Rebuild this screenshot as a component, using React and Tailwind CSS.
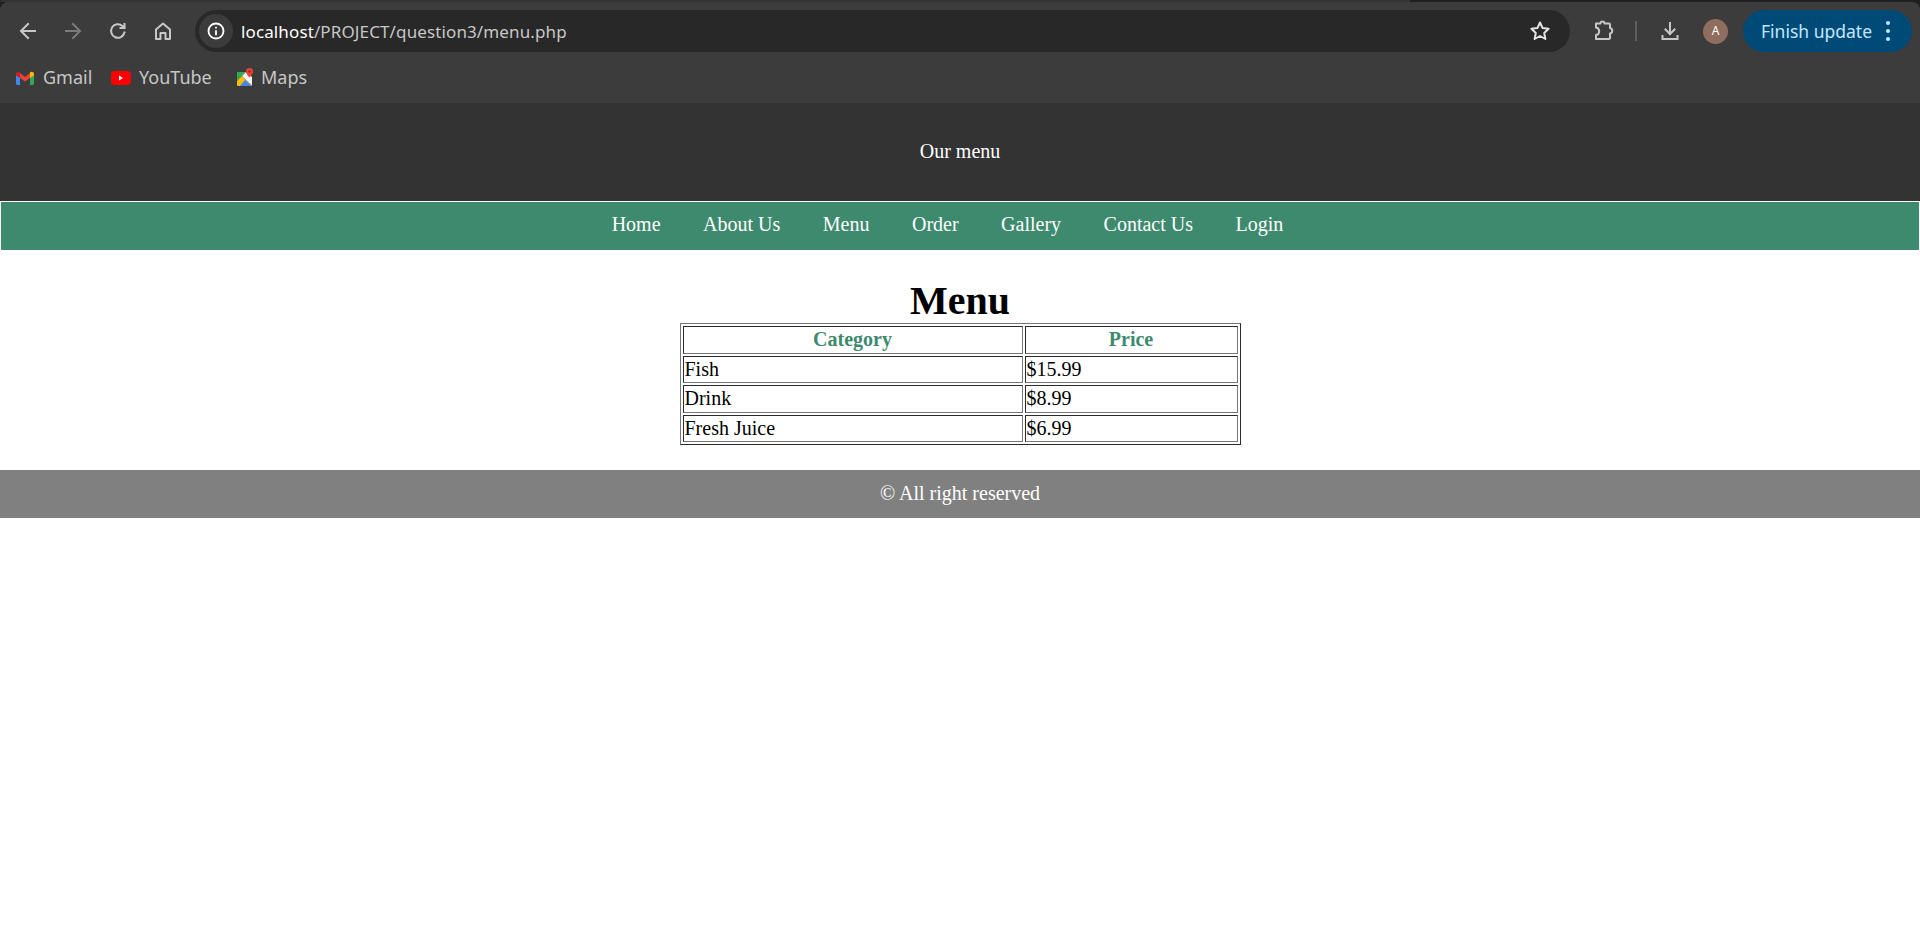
import React from "react";

const navItems = ["Home", "About Us", "Menu", "Order", "Gallery", "Contact Us", "Login"];
const rows = [
  ["Fish", "$15.99", "h-[27px]"],
  ["Drink", "$8.99", "h-[28px]"],
  ["Fresh Juice", "$6.99", "h-[27px]"],
];

const cellBorder = "border border-t-[#2b2b2b] border-l-[#2b2b2b] border-r-[#767676] border-b-[#767676]";

function Icon({ children, className = "" }) {
  return (
    <svg viewBox="0 0 24 24" fill="none" stroke="currentColor" strokeWidth="2" strokeLinecap="square" className={"w-6 h-6 " + className}>
      {children}
    </svg>
  );
}

function GmailIcon() {
  return (
    <svg viewBox="0 0 18 14" className="w-[18px] h-[14px]">
      <path d="M0 3v9.500A1.500 1.500 0 0 0 1.500 14H4V6.500Z" fill="#4285f4" />
      <path d="M18 3v9.500a1.500 1.500 0 0 1-1.500 1.500H14V6.500Z" fill="#34a853" />
      <path d="M4 7V2l5 4 5-4V7L9 10.500Z" fill="#ea4335" />
      <path d="M0 3.200C0 1 2.500 .2 4 1.500V7L0 4.300Z" fill="#c5221f" />
      <path d="M18 3.200C18 1 15.500 .2 14 1.500V7L18 4.300Z" fill="#fbbc04" />
    </svg>
  );
}

function YoutubeIcon() {
  return (
    <svg viewBox="0 0 20 14" className="w-[20px] h-[14px]">
      <rect width="20" height="14" rx="4" fill="#ff0000" />
      <path d="M8 4.500v5L12 7Z" fill="#fff" />
    </svg>
  );
}

function MapsIcon() {
  return (
    <svg viewBox="0 0 18 19" className="w-[18px] h-[19px]">
      <path d="M1 4h9L1 13Z" fill="#34a853" />
      <path d="M1 13l5-5 9 10H2a1 1 0 0 1-1-1Z" fill="#fbbc04" />
      <path d="M4 18l5-6 6 6Z" fill="#4285f4" />
      <path d="M6 8l4-4 6 5v9Z" fill="#f1f3f4" />
      <path d="M13.500 0a3.500 3.500 0 0 0-3.500 3.500c0 2.500 3.500 6 3.500 6s3.500-3.500 3.500-6A3.500 3.500 0 0 0 13.500 0Z" fill="#ea4335" />
      <circle cx="13.500" cy="3.500" r="1.200" fill="#a52714" />
    </svg>
  );
}

function Bookmark({ icon, label, className }) {
  return (
    <div className={"flex items-center text-[#c7c7c7] text-[18px] " + className}>
      {icon}
      <span>{label}</span>
    </div>
  );
}

function BrowserChrome() {
  return (
    <div className="bg-[#1f1f1f] font-['Noto_Sans',sans-serif]">
      <div className="h-[2px] w-[1410px] bg-[#333333] rounded-tl-[6px]" />
      <div className="bg-[#3c3c3c] rounded-t-[8px] h-[101px] flex flex-col">
        <div className="h-[52px] flex items-center pt-[6px]">
          <div className="w-[195px] pl-[16px] flex items-center gap-[21px] text-[#c7c7c7] shrink-0">
            <Icon><path d="M19 12H6M12 19l-7-7 7-7" /></Icon>
            <Icon className="text-[#7b7b7b]"><path d="M5 12h13M12 5l7 7-7 7" /></Icon>
            <Icon><path d="M18.500 13.500A6.800 6.800 0 1 1 16.500 7l2 2M18.500 5v4h-4" /></Icon>
            <Icon><path d="M5 10.500 12 4.500l7 6V20h-4.500v-6h-5v6H5Z" strokeLinejoin="round" /></Icon>
          </div>
          <div className="w-[1375px] h-[42px] bg-[#282828] rounded-full flex items-center pl-[4px] pr-[18px]">
            <div className="w-[34px] h-[34px] rounded-full bg-[#3c3c3c] flex items-center justify-center text-white">
              <svg viewBox="0 0 24 24" fill="none" stroke="currentColor" strokeWidth="2.200" className="w-[20px] h-[20px]">
                <circle cx="12" cy="12" r="9" />
                <path d="M12 11v6M12 7v2" />
              </svg>
            </div>
            <div className="ml-[8px] pt-px text-[17px] tracking-[0.12px] text-[#c7c7c7]"><span className="text-white">localhost</span>/PROJECT/question3/menu.php</div>
            <svg viewBox="0 0 24 24" fill="none" stroke="#e3e3e3" strokeWidth="2" strokeLinejoin="round" className="w-[24px] h-[24px] ml-auto">
              <path d="m12 3.500 2.600 5.600 6 .7-4.400 4.200 1.200 6L12 17l-5.400 3 1.200-6-4.400-4.200 6-.7Z" />
            </svg>
          </div>
          <div className="flex-1 flex items-center text-[#c7c7c7]">
            <Icon className="ml-[21px]"><path d="M5 4.500h4.500a2 2 0 0 1 4 0H18a1 1 0 0 1 1 1V9a2.800 2.800 0 0 1 0 5.500V19a1 1 0 0 1-1 1H5v-4a3.800 3.800 0 0 0 0-7.500Z" strokeLinejoin="round" /></Icon>
            <div className="w-[2px] h-[20px] bg-[#5e5e5e] ml-[20px]" />
            <Icon className="ml-[21px]"><path d="M12 4v11M7.500 10.500 12 15l4.500-4.500M4.500 17v3h15v-3" /></Icon>
            <div className="w-[25px] h-[25px] ml-[21px] rounded-full bg-[#8f6e60] text-white text-[12px] flex items-center justify-center">A</div>
            <div className="ml-[15px] w-[169px] h-[42px] bg-[#004a77] rounded-full flex items-center pl-[18px] text-[#c2e7ff] text-[17.5px]">
              <span>Finish update</span>
              <div className="ml-[14px] flex flex-col gap-[4px]">
                <div className="w-[4px] h-[4px] rounded-full bg-[#c2e7ff]" />
                <div className="w-[4px] h-[4px] rounded-full bg-[#c2e7ff]" />
                <div className="w-[4px] h-[4px] rounded-full bg-[#c2e7ff]" />
              </div>
            </div>
          </div>
        </div>
        <div className="flex-1 flex items-center pl-[16px] pb-[2px]">
          <Bookmark icon={<GmailIcon />} label="Gmail" className="w-[95px] gap-[9px]" />
          <Bookmark icon={<YoutubeIcon />} label="YouTube" className="w-[125px] gap-[8px]" />
          <Bookmark icon={<MapsIcon />} label="Maps" className="w-[80px] gap-[7px]" />
        </div>
      </div>
    </div>
  );
}

export default function App() {
  return (
    <div className="min-h-[928px] bg-white overflow-hidden">
      <BrowserChrome />
      <div className="font-['Liberation_Serif',serif] text-[20px] text-black">
        <div className="bg-[#333333] h-[98px] flex items-center justify-center text-white pb-[2px]">Our menu</div>
        <nav className="bg-[#3e8a6e] border border-white h-[50px] flex items-center justify-center gap-[42.5px] text-white pr-[25px] pb-[4px]">
          {navItems.map(n => <a key={n}>{n}</a>)}
        </nav>
        <h1 className="text-[40px] font-bold text-center mt-[27px] leading-[45px]">Menu</h1>
        <table className="mx-auto w-[561px] leading-[23px] border-separate border-spacing-[2px] border border-t-[#767676] border-l-[#767676] border-r-[#2b2b2b] border-b-[#2b2b2b]">
          <thead>
            <tr>
              <th className={"w-[340px] h-[28px] p-0 pb-[2px] text-[#3e8a6e] " + cellBorder}>Category</th>
              <th className={"p-0 pb-[2px] text-[#3e8a6e] " + cellBorder}>Price</th>
            </tr>
          </thead>
          <tbody>
            {rows.map(r => (
              <tr key={r[0]}>
                <td className={r[2] + " p-px align-top " + cellBorder}>{r[0]}</td>
                <td className={r[2] + " p-px align-top " + cellBorder}>{r[1]}</td>
              </tr>
            ))}
          </tbody>
        </table>
        <footer className="bg-[#808080] h-[48px] mt-[25px] flex items-center justify-center text-white pb-[2px]">© All right reserved</footer>
      </div>
    </div>
  );
}
